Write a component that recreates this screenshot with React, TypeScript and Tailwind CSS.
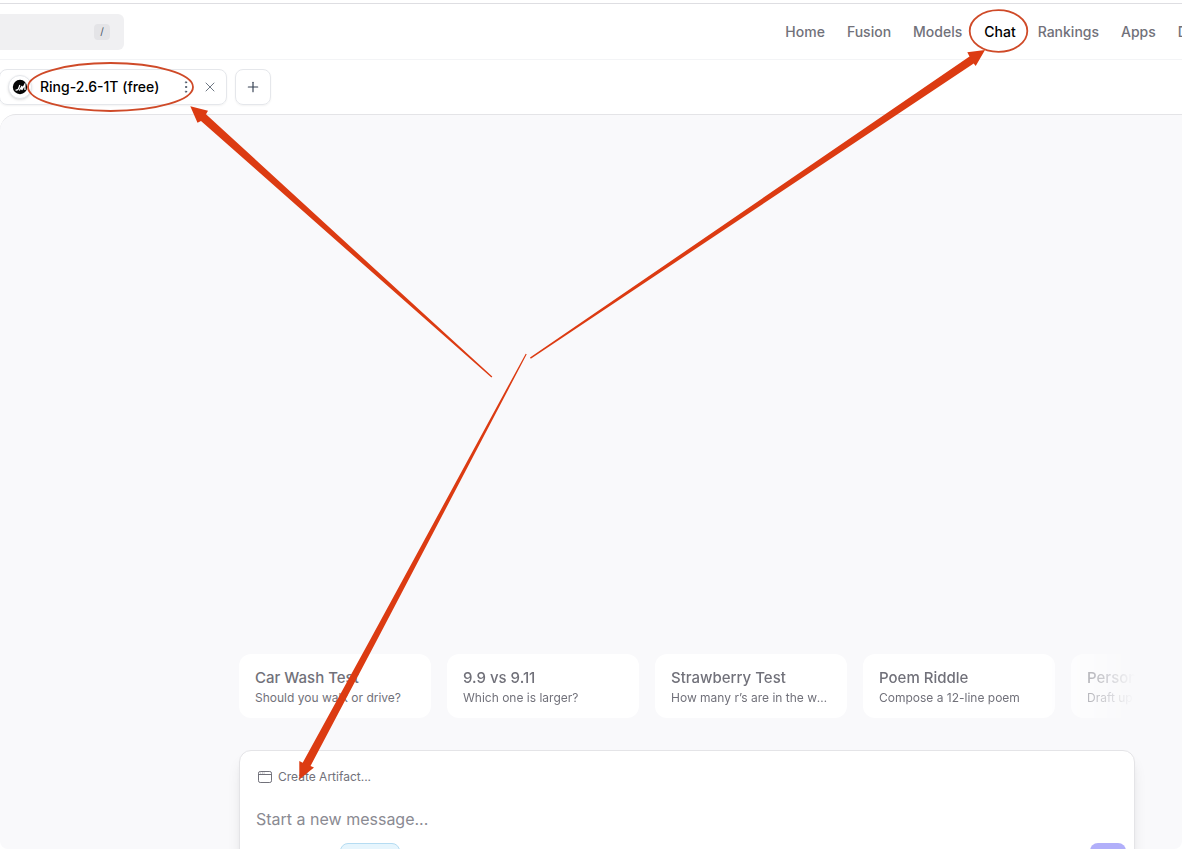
import React from "react";
import { EllipsisVertical, Plus, X } from "lucide-react";

const navItems = ["Home", "Fusion", "Models", "Chat", "Rankings", "Apps", "Docs"];

const suggestions = [
  { title: "Car Wash Test", text: "Should you walk or drive?" },
  { title: "9.9 vs 9.11", text: "Which one is larger?" },
  { title: "Strawberry Test", text: "How many r’s are in the word strawberry?" },
  { title: "Poem Riddle", text: "Compose a 12-line poem" },
  { title: "Personal Finance", text: "Draft up a proposal" },
];

function ModelLogo() {
  return (
    <span className="flex size-6 shrink-0 items-center justify-center rounded-full border border-gray-200 bg-white shadow">
      <svg viewBox="0 0 16 16" className="size-4" aria-hidden="true">
        <circle cx="8" cy="8" r="7.2" fill="#050505" />
        <path d="M3.5 11c2 .3 3.200-.6 3.800-3.400L7.800 6" fill="none" stroke="#fff" strokeWidth="1.200" />
        <path d="M7.300 11.500 10 7l-.2 4L12.800 5.500l.2 5.500" fill="none" stroke="#fff" strokeWidth="1.300" />
      </svg>
    </span>
  );
}

function WindowIcon() {
  return (
    <svg viewBox="0 0 14 14" className="size-[14px]" fill="none" stroke="currentColor" aria-hidden="true">
      <rect x="0.500" y="1.500" width="13" height="11" rx="1.700" />
      <path d="M0.500 4.500h13" />
      <path d="M2.300 3h.8M4 3h.8M5.700 3h.8" strokeWidth="0.800" />
    </svg>
  );
}

function Header() {
  return (
    <header className="flex h-[60px] shrink-0 items-center overflow-hidden border-b border-gray-100 pt-1">
      <label className="flex h-9 w-[124px] shrink-0 items-center rounded-r-md bg-[#f0f0f2] pr-[14px]">
        <input type="search" aria-label="Search" className="h-full min-w-0 flex-1 bg-transparent px-2 text-sm outline-none" />
        <kbd className="flex size-4 items-center justify-center rounded bg-[#e4e4e7] font-['Inter',sans-serif] text-[10px] text-gray-600">/</kbd>
      </label>
      <nav className="-mr-[30px] ml-auto flex shrink-0 gap-[22px] text-sm font-medium text-[#71717a]">
        {navItems.map((item) => (
          <a key={item} href="#" className={item === "Chat" ? "text-black" : ""}>
            {item}
          </a>
        ))}
      </nav>
    </header>
  );
}

function ModelTabs() {
  return (
    <div className="flex shrink-0 gap-2 py-[9px]">
      <div className="-ml-px flex h-9 w-[228px] items-center rounded-lg border border-gray-200 pl-2 shadow-xs">
        <ModelLogo />
        <button className="ml-2 whitespace-nowrap text-sm font-medium text-black">Ring-2.6-1T (free)</button>
        <div className="ml-auto flex items-center gap-2 pr-2 text-gray-600">
          <button aria-label="Model options">
            <EllipsisVertical className="size-4" strokeWidth={1.5} />
          </button>
          <button aria-label="Remove model">
            <X className="size-4" strokeWidth={1.2} />
          </button>
        </div>
      </div>
      <button aria-label="Add model" className="flex size-9 items-center justify-center rounded-lg border border-gray-200 text-gray-700 shadow-xs">
        <Plus className="size-4" strokeWidth={1.75} />
      </button>
    </div>
  );
}

function Composer() {
  return (
    <form className="rounded-xl border border-[#e4e4e7] bg-white px-2 pb-2 pt-4 shadow-lg">
      <button type="button" className="flex h-5 items-center gap-[6px] pl-[10px] text-xs text-[#71717a]">
        <WindowIcon />
        Create Artifact...
      </button>
      <textarea
        aria-label="Message"
        placeholder="Start a new message..."
        className="mt-5 block h-9 w-full resize-none px-2 text-base text-black outline-none placeholder:text-[#8a8a92]"
      />
      <div className="flex items-center justify-between">
        <button type="button" aria-label="Search the web" className="ml-[92px] h-9 w-[60px] rounded-lg border border-[#b5dcf2] bg-[#e6f5fd]" />
        <button type="submit" aria-label="Send message" className="size-9 rounded-lg bg-[#b1affa]" />
      </div>
    </form>
  );
}

function Annotations() {
  return (
    <svg viewBox="0 0 1182 849" width="1182" height="849" className="pointer-events-none absolute left-0 top-0" aria-hidden="true">
      <g fill="none" stroke="#cf4a28" strokeWidth="1.800">
        <ellipse cx="110.500" cy="87" rx="82.500" ry="24" />
        <ellipse cx="998.500" cy="31" rx="28.800" ry="20.800" />
      </g>
      <g fill="#dc3b12">
        <path d="M190.300 106.300 208 110.700 206 114.300 492.300 376.600 491.400 377.600 201 121 197.500 122.800Z" />
        <path d="M985 50 967.300 52.300 969.500 56.500 530 357.500 530.800 358.700 973.700 63.500 975.700 66Z" />
        <path d="M299.300 779.500 299.300 761 302.700 762.800 370 640 525.700 353.700 526.700 354.300 377 640 310.500 766 314 767.500Z" />
      </g>
    </svg>
  );
}

export default function App() {
  return (
    <div className="relative flex h-screen flex-col overflow-hidden bg-white font-['Inter',sans-serif]">
      <div className="mt-[3px] h-px shrink-0 bg-[#dedee2]" />
      <div className="-mt-1 flex min-h-0 flex-1 flex-col">
        <Header />
        <ModelTabs />
        <main className="flex min-h-0 flex-1 flex-col justify-end overflow-hidden rounded-tl-2xl rounded-b-lg border-t border-[#e4e4e7] bg-[#f9f9fb] pl-48">
          <div className="mx-auto -mb-[39px] w-full max-w-4xl">
            <div className="mb-8 flex gap-4 overflow-hidden [mask-image:linear-gradient(to_right,black_calc(100%-96px),transparent)]">
              {suggestions.map((s) => (
                <button key={s.title} className="h-16 w-48 shrink-0 rounded-xl bg-white px-4 pt-1 text-left text-[#71717a]">
                  <span className="block truncate text-[15px] font-medium leading-5">{s.title}</span>
                  <span className="block truncate text-xs leading-5">{s.text}</span>
                </button>
              ))}
            </div>
            <Composer />
          </div>
        </main>
      </div>
      <Annotations />
    </div>
  );
}
